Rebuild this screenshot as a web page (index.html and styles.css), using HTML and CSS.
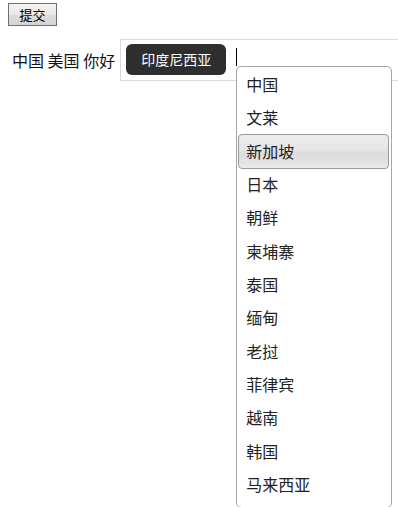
FILE: index.html
```html
<!DOCTYPE html>
<html lang="zh">
<head>
<meta charset="utf-8">
<title>提交</title>
<link rel="stylesheet" href="styles.css">
</head>
<body>
<button class="submit" type="button">提交</button>
<div class="row">
  <span class="label">中国 美国 你好</span>
  <div class="field">
    <span class="tag">印度尼西亚</span>
    <span class="caret"></span>
    <ul class="menu">
      <li class="item">中国</li>
      <li class="item">文莱</li>
      <li class="item hover">新加坡</li>
      <li class="item">日本</li>
      <li class="item">朝鲜</li>
      <li class="item">柬埔寨</li>
      <li class="item">泰国</li>
      <li class="item">缅甸</li>
      <li class="item">老挝</li>
      <li class="item">菲律宾</li>
      <li class="item">越南</li>
      <li class="item">韩国</li>
      <li class="item">马来西亚</li>
    </ul>
  </div>
</div>
</body>
</html>
```
FILE: styles.css
```css
html {
  background: #ffffff;
  min-height: 100%;
}
body {
  margin: 3px 0 0 8px;
  min-height: 504px;
  font-family: "Noto Sans CJK SC", "Noto Sans", sans-serif;
  color: #111;
}
.submit {
  display: block;
  box-sizing: border-box;
  width: 49px;
  height: 23px;
  margin: 0;
  padding: 0;
  border: 1px solid #707070;
  border-radius: 0;
  background: linear-gradient(#f4f4f4, #e8e8e8 50%, #dcdcdc 51%, #d4d4d4);
  font-family: "Noto Sans CJK SC", sans-serif;
  font-size: 13px;
  line-height: 20px;
  color: #000;
}
.row {
  display: flex;
  align-items: center;
  margin-top: 13px;
}
.label {
  padding-left: 4px;
  margin-right: 5px;
  font-size: 16px;
  line-height: 20px;
  color: #111;
  white-space: nowrap;
}
.field {
  position: relative;
  flex: 1;
  display: flex;
  align-items: center;
  box-sizing: border-box;
  height: 42px;
  padding-left: 5px;
  border: 1px solid #dcdcdc;
  border-right: none;
}
.tag {
  display: block;
  height: 31px;
  width: 100px;
  box-sizing: border-box;
  margin-top: -1px;
  background: #2e2e2e;
  border-radius: 6px;
  color: #fff;
  font-size: 14px;
  line-height: 31px;
  text-align: center;
}
.caret {
  display: block;
  width: 1px;
  height: 18px;
  margin-left: 10px;
  margin-top: -6px;
  background: #000;
}
.menu {
  position: absolute;
  z-index: 5;
  left: 115px;
  top: 26px;
  width: 154px;
  margin: 0;
  padding: 1px 0 6px;
  list-style: none;
  background: #fff;
  border: 1px solid #a6a6a6;
  border-radius: 5px;
}
.item {
  height: 33.33px;
  line-height: 33.33px;
  padding-left: 9px;
  font-size: 16px;
  color: #222;
  white-space: nowrap;
}
.item.hover {
  margin: -1px 2px -1px 1px;
  padding-left: 7px;
  border: 1px solid #9a9a9a;
  border-radius: 4px;
  background: linear-gradient(#ececec, #e6e6e6 45%, #dcdcdc 55%, #e4e4e4 85%, #ececec);
}
```
